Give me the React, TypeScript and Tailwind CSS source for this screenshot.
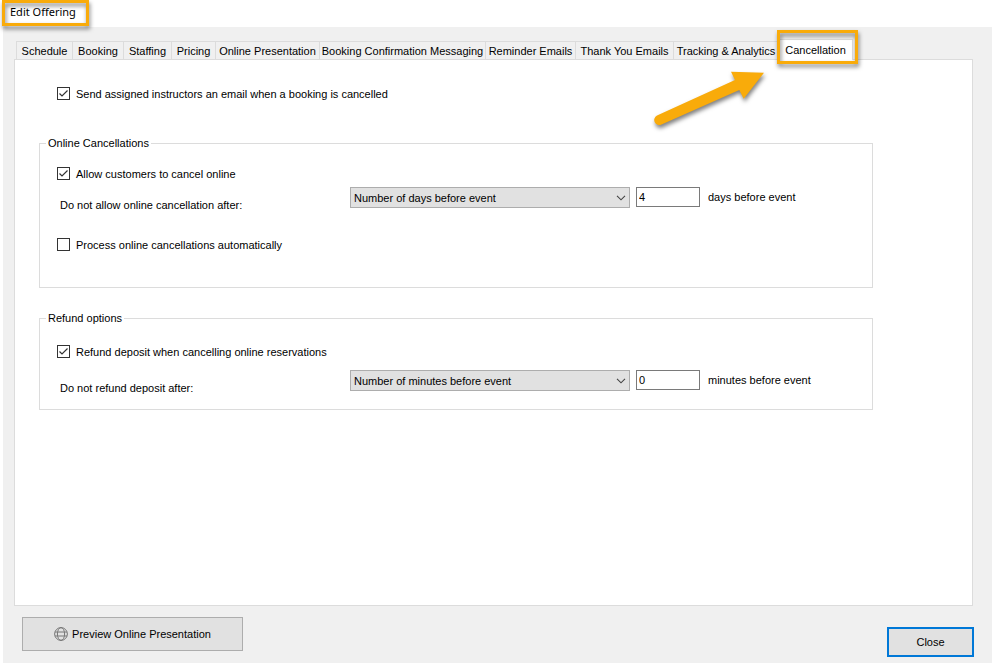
import { useState } from 'react'
import type { ReactNode } from 'react'
import clsx from 'clsx'

const TABS = [
  { name: 'Schedule', width: 'w-[57px]' },
  { name: 'Booking', width: 'w-[51px]' },
  { name: 'Staffing', width: 'w-[48px]' },
  { name: 'Pricing', width: 'w-[44px]' },
  { name: 'Online Presentation', width: 'w-[104px]' },
  { name: 'Booking Confirmation Messaging', width: 'w-[166px]' },
  { name: 'Reminder Emails', width: 'w-[90px]' },
  { name: 'Thank You Emails', width: 'w-[98px]' },
  { name: 'Tracking & Analytics', width: 'w-[105px]' },
]

// Orange callout frame drawn over its parent
function Highlight({ className }: { className: string }) {
  return (
    <span
      className={clsx(
        'pointer-events-none absolute border-3 border-[#f9ab0a] drop-shadow-[1px_3px_2px_rgba(0,0,0,0.5)]',
        className,
      )}
    />
  )
}

function Arrow() {
  return (
    <svg
      width="120"
      height="70"
      viewBox="0 0 120 70"
      className="pointer-events-none absolute top-[26px] right-[83px] drop-shadow-[1px_3px_2px_rgba(0,0,0,0.5)]"
      aria-hidden="true"
    >
      <path
        d="M7 50.5 L85 15 L81 6.7 L114 7.7 L93.7 33.7 L89.3 25 L11.5 59.5 A5 5 0 0 1 7 50.5 Z"
        fill="#f9ab0a"
      />
    </svg>
  )
}

function Checkbox({ id, label, defaultChecked }: { id: string; label: string; defaultChecked?: boolean }) {
  return (
    <div className="flex h-4 items-start gap-1.5">
      <span className="mt-px grid size-[13px] shrink-0">
        <input
          id={id}
          type="checkbox"
          defaultChecked={defaultChecked}
          className="peer size-[13px] appearance-none border border-[#333] bg-white [grid-area:1/1]"
        />
        <svg
          viewBox="0 0 13 13"
          className="pointer-events-none invisible size-[13px] [grid-area:1/1] peer-checked:visible"
          aria-hidden="true"
        >
          <path d="M2.5 6.5 L5 9 L10.5 3.5" fill="none" stroke="#333" strokeWidth="1.2" />
        </svg>
      </span>
      <label htmlFor={id} className="whitespace-nowrap">{label}</label>
    </div>
  )
}

function Cutoff({ id, unit, value }: { id: string; unit: string; value: string }) {
  return (
    <div className="flex items-start">
      <span className="grid w-[280px] shrink-0 items-center">
        <select
          id={id}
          defaultValue={unit}
          className="h-[21px] w-full appearance-none border border-[#adadad] bg-[#e1e1e1] pl-[3px] [grid-area:1/1]"
        >
          <option value="days">Number of days before event</option>
          <option value="minutes">Number of minutes before event</option>
        </select>
        <svg
          viewBox="0 0 10 6"
          className="pointer-events-none mr-1 h-[6px] w-[10px] justify-self-end [grid-area:1/1]"
          aria-hidden="true"
        >
          <path d="M1 0.8 L5 4.8 L9 0.8" fill="none" stroke="#444" strokeWidth="1.1" />
        </svg>
      </span>
      <input
        id={`${id}-amount`}
        type="text"
        defaultValue={value}
        className="ml-1.5 h-5 w-16 border border-[#7a7a7a] bg-white px-[2px]"
      />
      <label htmlFor={`${id}-amount`} className="ml-2 leading-5 whitespace-nowrap">
        {unit} before event
      </label>
    </div>
  )
}

function Group({ title, className, children }: { title: string; className: string; children: ReactNode }) {
  return (
    <fieldset className={clsx('mr-[75px] -ml-px border border-[#dcdcdc]', className)}>
      <legend className="ml-[6px] px-[2px] leading-4">{title}</legend>
      <div className="grid grid-cols-[293px_1fr] pl-[17px]">{children}</div>
    </fieldset>
  )
}

export default function App() {
  const [active, setActive] = useState('Cancellation')

  return (
    <div className="flex min-h-screen flex-col bg-white font-['Liberation_Sans',Arial,sans-serif] text-[11px] leading-4 text-black">
      <header className="relative h-[27px] shrink-0">
        <h1 className="pt-1 pl-[10px] font-['Noto_Sans',sans-serif] text-[11px] leading-4">Edit Offering</h1>
        <Highlight className="top-0 left-[2px] h-[26px] w-[87px]" />
      </header>

      <div className="ml-[3px] flex grow flex-col bg-[#f0f0f0] pr-[19px] pl-[11px]">
        <div role="tablist" className="z-10 -mb-px flex items-end pt-3 pl-[2px]">
          {TABS.map((tab, i) => (
            <button
              key={tab.name}
              type="button"
              role="tab"
              aria-selected={active === tab.name}
              onClick={() => setActive(tab.name)}
              className={clsx(
                'h-[19px] shrink-0 border-y border-r border-[#dcdcdc] whitespace-nowrap',
                i === 0 && 'border-l',
                tab.width,
              )}
            >
              {tab.name}
            </button>
          ))}
          <div className="relative">
            <button
              type="button"
              role="tab"
              aria-selected={active === 'Cancellation'}
              onClick={() => setActive('Cancellation')}
              className="block h-[21px] w-[74px] border-t border-r border-[#dcdcdc] bg-white pb-px"
            >
              Cancellation
            </button>
            <Highlight className="-top-[9px] -right-[5px] h-[34px] w-[81px]" />
            <Arrow />
          </div>
        </div>

        <main role="tabpanel" className="grow border border-[#dcdcdc] bg-white pt-[26px] pr-6 pl-[25px]">
          <div className="pl-[17px]">
            <Checkbox
              id="email-instructors"
              label="Send assigned instructors an email when a booking is cancelled"
              defaultChecked
            />
          </div>

          <Group title="Online Cancellations" className="mt-[33px]">
            <div className="pt-[15px] pb-[34px]">
              <Checkbox id="allow-cancel" label="Allow customers to cancel online" defaultChecked />
              <label htmlFor="cancel-cutoff" className="mt-[15px] mb-6 block pl-[3px]">
                Do not allow online cancellation after:
              </label>
              <Checkbox id="auto-process" label="Process online cancellations automatically" />
            </div>
            <div className="pt-9">
              <Cutoff id="cancel-cutoff" unit="days" value="4" />
            </div>
          </Group>

          <Group title="Refund options" className="mt-[22px]">
            <div className="pt-[18px] pb-[13px]">
              <Checkbox id="refund-deposit" label="Refund deposit when cancelling online reservations" defaultChecked />
              <label htmlFor="refund-cutoff" className="mt-5 block pl-[3px]">
                Do not refund deposit after:
              </label>
            </div>
            <div className="pt-11">
              <Cutoff id="refund-cutoff" unit="minutes" value="0" />
            </div>
          </Group>
        </main>

        <footer className="-mr-px flex items-start justify-between pt-[11px] pb-1.5 pl-2">
          <button
            type="button"
            className="flex h-[34px] w-[221px] items-center justify-center gap-1 border border-[#adadad] bg-[#e1e1e1]"
          >
            <svg width="14" height="14" viewBox="0 0 14 14" fill="none" stroke="#777" aria-hidden="true">
              <circle cx="7" cy="7" r="6.4" />
              <ellipse cx="7" cy="7" rx="3.6" ry="6.4" />
              <path d="M1 5 H13 M1 9 H13" />
            </svg>
            Preview Online Presentation
          </button>
          <button type="button" className="mt-2.5 h-[30px] w-[87px] border-2 border-[#0078d7] bg-[#e1e1e1]">
            Close
          </button>
        </footer>
      </div>
    </div>
  )
}
